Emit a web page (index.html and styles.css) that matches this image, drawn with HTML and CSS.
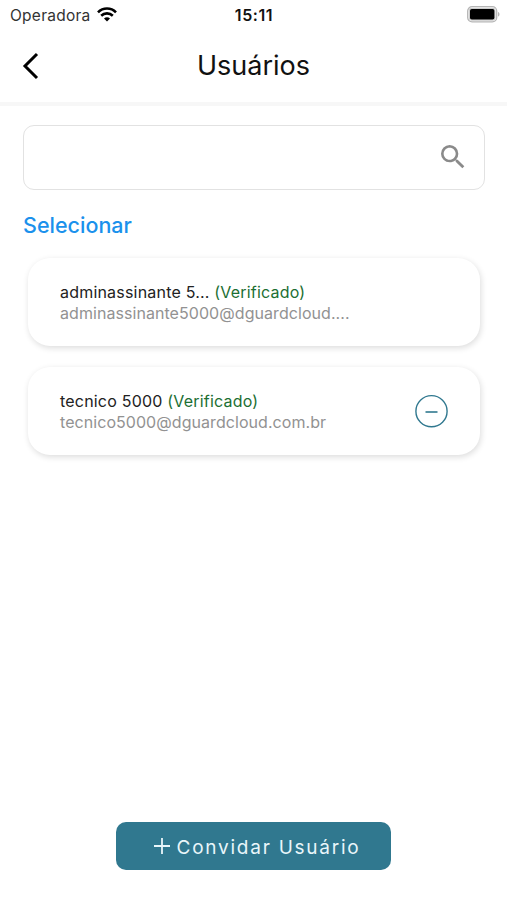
FILE: index.html
```html
<!DOCTYPE html>
<html lang="pt-BR">
  <head>
    <meta charset="UTF-8" />
    <meta name="viewport" content="width=device-width, initial-scale=1.0" />
    <title>Usuários</title>
    <link rel="stylesheet" href="styles.css">
  </head>

  <body>
    <div class="statusBar">
      <div class="carrier">
        <span class="carrierName">Operadora</span>
        <svg class="wifi" width="20" height="15" viewBox="0 0 20 15" fill="none" stroke="#000" stroke-width="2.6">
          <path d="M1 5.3C6 .3 14 .3 19 5.3" />
          <path d="M4.2 8.7C7.4 5.6 12.6 5.6 15.8 8.7" />
          <path d="M7 11.4C8.7 9.8 11.3 9.8 13 11.4L10 14.6Z" fill="#000" stroke="none" />
        </svg>
      </div>
      <div class="time">15:11</div>
      <svg class="battery" width="33" height="17" viewBox="0 0 33 17">
        <rect x="0.7" y="0.7" width="29" height="15.2" rx="4.4" fill="#fff" stroke="#b5b5b5" stroke-width="1.3" />
        <rect x="1.8" y="1.8" width="26.8" height="13" rx="3" fill="#ccc" />
        <rect x="3" y="3" width="24.4" height="10.6" rx="1.8" fill="#000" />
        <path d="M31 6v4.6c2-.7 2-3.9 0-4.6z" fill="#b5b5b5" />
      </svg>
    </div>

    <header class="header">
      <button class="back" aria-label="Voltar">
        <svg width="18" height="28" viewBox="0 0 18 28" fill="none" stroke="#000" stroke-width="3">
          <path d="M16 2L4 14L16 26" />
        </svg>
      </button>
      <h1 class="title">Usuários</h1>
    </header>

    <main class="content">
      <div class="search">
        <input class="searchInput" type="text" aria-label="Buscar" />
        <svg class="searchIcon" width="32" height="32" viewBox="0 0 24 24" fill="#8a8a8a">
          <path d="M15.5 14h-.79l-.28-.27A6.47 6.47 0 0 0 16 9.5 6.5 6.5 0 1 0 9.5 16c1.61 0 3.09-.59 4.23-1.57l.27.28v.79l5 4.99L20.49 19l-4.99-5zm-6 0C7.01 14 5 11.99 5 9.5S7.01 5 9.5 5 14 7.01 14 9.5 11.99 14 9.5 14z" />
        </svg>
      </div>
      <div class="select">Selecionar</div>

      <ul class="users">
        <li class="card">
          <div class="info">
            <div class="name">adminassinante 5... <span class="verified">(Verificado)</span></div>
            <div class="email">adminassinante5000@dguardcloud....</div>
          </div>
        </li>
        <li class="card">
          <div class="info">
            <div class="name">tecnico 5000 <span class="verified">(Verificado)</span></div>
            <div class="email">tecnico5000@dguardcloud.com.br</div>
          </div>
          <button class="remove" aria-label="Remover">
            <svg width="33" height="34" viewBox="0 0 33 34" fill="none" stroke="#30788f" stroke-width="1.4">
              <circle cx="16.5" cy="17.2" r="15.6" />
              <path d="M10.5 18H22.5" stroke-width="1.6" />
            </svg>
          </button>
        </li>
      </ul>
    </main>

    <footer class="footer">
      <button class="invite">
        <svg width="16" height="16" viewBox="0 0 16 16" stroke="#e9f6fa" stroke-width="1.8">
          <path d="M8 0V16M0 8H16" />
        </svg>
        <span class="inviteText">Convidar Usuário</span>
      </button>
    </footer>
  </body>
</html>
```
FILE: styles.css
```css
* {
  box-sizing: border-box;
}

body,
h1,
ul {
  margin: 0;
  padding: 0;
}

body {
  display: flex;
  flex-direction: column;
  height: 900px;
  background: #fff;
  color: #111;
  font-family: Inter, "Liberation Sans", sans-serif;
  overflow: hidden;
}

button {
  padding: 0;
  border: 0;
  background: none;
  font-family: inherit;
}

svg {
  display: block;
  flex: none;
}

.statusBar {
  display: grid;
  grid-template-columns: 1fr auto 1fr;
  align-items: center;
  height: 29px;
  padding: 0 7px 0 10px;
}

.carrier {
  display: flex;
  align-items: center;
  gap: 6px;
}

.carrierName {
  padding-top: 1px;
  font-size: 15.5px;
  color: #333;
  letter-spacing: 0.25px;
}

.time {
  padding-right: 2px;
  font-size: 16px;
  font-weight: 600;
  letter-spacing: 0.6px;
}

.battery {
  justify-self: end;
}

.header {
  display: grid;
  grid-template-columns: 60px 1fr 60px;
  align-items: center;
  height: 77px;
  padding-top: 1px;
  border-bottom: 4px solid #f7f7f7;
}

.back {
  margin-left: 21px;
  justify-self: start;
}

.title {
  font-size: 27px;
  font-weight: 400;
  line-height: 34px;
  text-align: center;
}

.content {
  flex: 1;
  padding: 19px 22px 0 23px;
}

.search {
  display: flex;
  align-items: center;
  height: 65px;
  padding: 0 15px 1px 0;
  border: 1.5px solid #e2e2e2;
  border-radius: 11px;
}

.searchInput {
  flex: 1;
  height: 100%;
  padding: 0 16px;
  border: 0;
  outline: none;
  background: none;
  font-size: 18px;
}

.select {
  margin-top: 19px;
  font-size: 21.5px;
  font-weight: 550;
  line-height: 32px;
  color: #1b91ec;
}

.users {
  display: flex;
  flex-direction: column;
  gap: 21px;
  margin-top: 17px;
  padding: 0 5px;
  list-style: none;
}

.card {
  display: flex;
  align-items: center;
  justify-content: space-between;
  height: 88px;
  padding: 0 32px;
  border-radius: 22px;
  background: #fff;
  box-shadow: 1px 2px 6px rgba(0, 0, 0, 0.14);
}

.name,
.email {
  white-space: nowrap;
  font-size: 16px;
}

.name {
  line-height: 20px;
  letter-spacing: 0.2px;
  color: #222;
}

.verified {
  color: #1c6f33;
}

.email {
  padding-top: 1px;
  line-height: 20px;
  letter-spacing: 0.06px;
  color: #929292;
}

.footer {
  display: flex;
  justify-content: center;
  padding-bottom: 30px;
}

.invite {
  display: flex;
  align-items: center;
  justify-content: center;
  gap: 7px;
  width: 275px;
  height: 48px;
  padding-left: 7px;
  border-radius: 10px;
  background: #30788f;
  color: #e9f6fa;
}

.inviteText {
  padding-top: 2px;
  font-size: 19px;
  letter-spacing: 1.75px;
}
```
